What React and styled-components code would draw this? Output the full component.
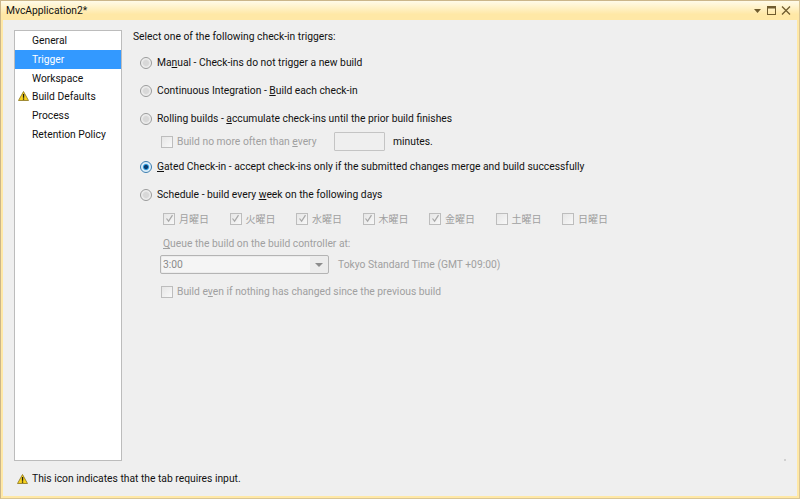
import React from "react";
import styled, { createGlobalStyle } from "styled-components";

const days = [
  { label: "月曜日", on: true },
  { label: "火曜日", on: true },
  { label: "水曜日", on: true },
  { label: "木曜日", on: true },
  { label: "金曜日", on: true },
  { label: "土曜日", on: false },
  { label: "日曜日", on: false },
];

const tabs = ["General", "Trigger", "Workspace", "Build Defaults", "Process", "Retention Policy"];

const WarnIcon = () => (
  <svg width="11" height="10" viewBox="0 0 11 10">
    <path d="M5.5 .5 L10.5 9.5 L.5 9.5 Z" fill="#f7d21e" stroke="#8a7420" strokeWidth="0.8" strokeLinejoin="round" />
    <rect x="4.9" y="3" width="1.3" height="3.8" fill="#1c1a10" />
    <rect x="4.9" y="7.4" width="1.3" height="1.3" fill="#1c1a10" />
  </svg>
);

const CheckMark = () => (
  <svg width="9" height="9" viewBox="0 0 9 9">
    <path d="M1.5 4.5 L3.6 7.2 L7.5 1.2" fill="none" stroke="#a8a8a8" strokeWidth="1.2" />
  </svg>
);

const App = () => {
  return (
    <Window>
      <GlobalStyle />
      <TitleBar>
        <Title>MvcApplication2*</Title>
        <TitleButtons>
          <svg width="40" height="12" viewBox="0 0 40 12">
            <path d="M0 4 H7 L3.5 8 Z" fill="#6f5b2e" />
            <rect x="13.5" y="1.5" width="8" height="8" fill="none" stroke="#6f5b2e" />
            <rect x="13" y="1" width="9" height="2.5" fill="#6f5b2e" />
            <path d="M28 1.5 L36 9.5 M36 1.5 L28 9.5" stroke="#6f5b2e" strokeWidth="1.3" />
          </svg>
        </TitleButtons>
      </TitleBar>
      <Body>
        <Main>
          <TabList>
            {tabs.map((t) => (
              <Tab key={t} $active={t === "Trigger"}>
                {t === "Build Defaults" && (
                  <TabIcon>
                    <WarnIcon />
                  </TabIcon>
                )}
                {t}
              </Tab>
            ))}
          </TabList>
          <Content>
            <Heading>Select one of the following check-in triggers:</Heading>
            <RadioRow $top={10}>
              <Radio />
              <span>Ma<u>n</u>ual - Check-ins do not trigger a new build</span>
            </RadioRow>
            <RadioRow $top={13}>
              <Radio />
              <span>Continuous Integration - <u>B</u>uild each check-in</span>
            </RadioRow>
            <RadioRow $top={13}>
              <Radio />
              <span>Rolling builds - <u>a</u>ccumulate check-ins until the prior build finishes</span>
            </RadioRow>
            <SubRow>
              <Check />
              <Muted>Build no more often than <u>e</u>very</Muted>
              <MinutesInput />
              <span>minutes.</span>
            </SubRow>
            <RadioRow $top={8}>
              <Radio $on />
              <span><u>G</u>ated Check-in - accept check-ins only if the submitted changes merge and build successfully</span>
            </RadioRow>
            <RadioRow $top={13}>
              <Radio />
              <span>Schedule - build every <u>w</u>eek on the following days</span>
            </RadioRow>
            <DayRow>
              {days.map((d) => (
                <Day key={d.label}>
                  <Check>{d.on && <CheckMark />}</Check>
                  <Muted $cjk>{d.label}</Muted>
                </Day>
              ))}
            </DayRow>
            <QueueLabel><u>Q</u>ueue the build on the build controller at:</QueueLabel>
            <TimeRow>
              <TimeSelect>
                <TimeValue>3:00</TimeValue>
                <Arrow />
              </TimeSelect>
              <Muted>Tokyo Standard Time (GMT +09:00)</Muted>
            </TimeRow>
            <EvenRow>
              <Check />
              <Muted>Build e<u>v</u>en if nothing has changed since the previous build</Muted>
            </EvenRow>
          </Content>
        </Main>
        <Footer>
          <WarnIcon />
          <span>This icon indicates that the tab requires input.</span>
        </Footer>
        <GripDot />
      </Body>
    </Window>
  );
};

export default App;

const GlobalStyle = createGlobalStyle`
  html, body {
    margin: 0;
    padding: 0;
    background: #efefef;
  }
  * {
    box-sizing: border-box;
  }
`;

const Window = styled.div`
  width: 800px;
  height: 499px;
  display: flex;
  flex-direction: column;
  overflow: hidden;
  border: 1px solid #cbb68a;
  border-right-color: #d8c596;
  border-bottom-color: #d8c596;
  font-family: Roboto, "Open Sans", sans-serif;
  font-size: 10.3px;
  color: #111;
`;

const TitleBar = styled.div`
  height: 19px;
  flex: none;
  display: flex;
  align-items: center;
  justify-content: space-between;
  padding: 0 4px 0 5px;
  background: linear-gradient(#fffbe9, #ffe8a6 70%, #ffe8a6);
`;

const Title = styled.div`
  font-size: 10.3px;
  color: #111;
`;

const TitleButtons = styled.div`
  display: flex;
  align-items: center;
  padding-right: 1px;
`;

const Body = styled.div`
  flex: 1;
  min-height: 0;
  position: relative;
  display: flex;
  flex-direction: column;
  background: #efefef;
  border: solid #ffe8a6;
  border-width: 0 2px 2px 2px;
`;

const Main = styled.div`
  flex: 1;
  min-height: 0;
  display: flex;
  padding: 10px 0 0 11px;
`;

const TabList = styled.div`
  width: 108px;
  height: 431px;
  flex: none;
  background: #fff;
  border: 1px solid #bcbcbc;
`;

const Tab = styled.div`
  position: relative;
  height: 18.8px;
  line-height: 20px;
  padding-left: 17px;
  color: ${(p) => (p.$active ? "#fff" : "#111")};
  background: ${(p) => (p.$active ? "#3399ff" : "transparent")};
`;

const TabIcon = styled.span`
  position: absolute;
  left: 3px;
  top: 4px;
  line-height: 0;
`;

const Content = styled.div`
  flex: 1;
  padding: 0 0 0 11px;
`;

const Heading = styled.div`
  height: 15px;
  line-height: 14px;
`;

const RadioRow = styled.div`
  display: flex;
  align-items: center;
  gap: 5px;
  height: 15px;
  line-height: 15px;
  margin-top: ${(p) => p.$top}px;
  padding-left: 7px;
`;

const Radio = styled.span`
  width: 12px;
  height: 12px;
  flex: none;
  border-radius: 50%;
  border: 1px solid ${(p) => (p.$on ? "#3c7fb1" : "#9a9b9b")};
  background: ${(p) =>
    p.$on
      ? "radial-gradient(circle at 50% 50%, #0d3d6e 0 1.6px, #2f9fe0 2.6px, #d9ecf9 3.6px, #eef6fc 100%)"
      : "radial-gradient(circle at 50% 50%, #d8d8d8 0 2.5px, #ececec 4px, #fafafa 100%)"};
`;

const Check = styled.span`
  width: 12px;
  height: 12px;
  flex: none;
  display: flex;
  align-items: center;
  justify-content: center;
  border: 1px solid #bdbdbd;
  background: linear-gradient(135deg, #e6e6e6, #f8f8f8);
`;

const Muted = styled.span`
  color: #a0a0a0;
  font-family: ${(p) => (p.$cjk ? '"Noto Sans CJK JP", sans-serif' : "inherit")};
  font-size: ${(p) => (p.$cjk ? "10px" : "inherit")};
`;

const SubRow = styled.div`
  display: flex;
  align-items: center;
  height: 19px;
  margin-top: 6px;
  padding-left: 28px;

  ${Muted} {
    margin-left: 4px;
    width: 157px;
  }
`;

const MinutesInput = styled.span`
  width: 51px;
  height: 19px;
  flex: none;
  margin-right: 8px;
  border: 1px solid #c4c4c4;
  border-radius: 1px;
  background: #efefef;
`;

const DayRow = styled.div`
  display: flex;
  margin-top: 9px;
  padding-left: 30px;
  height: 15px;
`;

const Day = styled.div`
  width: 66.5px;
  display: flex;
  align-items: center;
  gap: 4px;
`;

const QueueLabel = styled.div`
  margin-top: 10px;
  padding-left: 30px;
  height: 15px;
  line-height: 15px;
  color: #a0a0a0;
`;

const TimeRow = styled.div`
  display: flex;
  align-items: center;
  gap: 9px;
  margin-top: 4px;
  padding-left: 27px;
`;

const TimeSelect = styled.div`
  width: 169px;
  height: 19px;
  display: flex;
  align-items: center;
  justify-content: space-between;
  border: 1px solid #b4b4b4;
  border-radius: 2px;
  background: #ececec;
  padding: 1px;
`;

const TimeValue = styled.div`
  flex: 1;
  height: 100%;
  line-height: 15px;
  padding-left: 1px;
  color: #8a8a8a;
  background: #f5f5f5;
`;

const Arrow = styled.span`
  width: 0;
  height: 0;
  margin: 0 4px 0 5px;
  border: 4px solid transparent;
  border-top: 4px solid #8c8c8c;
  border-bottom-width: 0;
`;

const EvenRow = styled.div`
  display: flex;
  align-items: center;
  gap: 4px;
  height: 15px;
  margin-top: 10px;
  padding-left: 28px;
`;

const Footer = styled.div`
  height: 37px;
  flex: none;
  display: flex;
  align-items: center;
  gap: 4px;
  padding-left: 14px;
  padding-top: 2px;
`;

const GripDot = styled.span`
  position: absolute;
  right: 11px;
  bottom: 35px;
  width: 2px;
  height: 2px;
  background: #d0d0d0;
`;
